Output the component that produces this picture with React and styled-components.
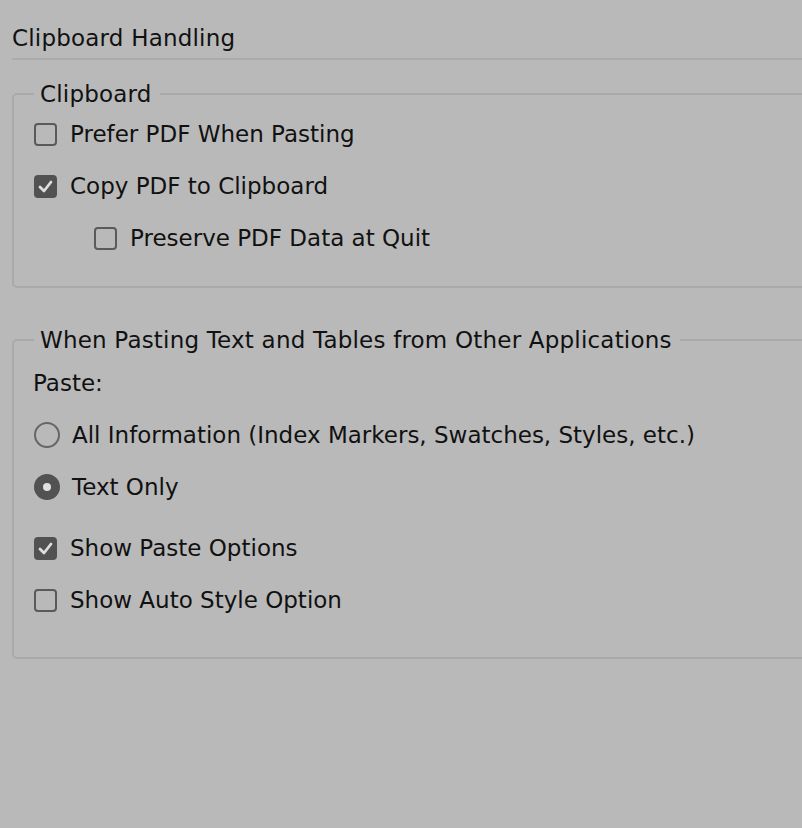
import React from "react";
import styled, { createGlobalStyle } from "styled-components";

const GlobalStyle = createGlobalStyle`
  html, body {
    margin: 0;
    padding: 0;
    background: #b9b9b9;
  }
  body {
    font-family: "DejaVu Sans", "Liberation Sans", sans-serif;
    color: #111;
  }
`;

const Page = styled.div`
  width: 802px;
  height: 828px;
  overflow: hidden;
  background: #b9b9b9;
  padding: 24px 0 0 12px;
  box-sizing: border-box;
`;

const Title = styled.h1`
  margin: 0;
  font-weight: 400;
  font-size: 23px;
  line-height: 28px;
  letter-spacing: 0.2px;
  padding-bottom: 6px;
  border-bottom: 2px solid #ababab;
`;

const Group = styled.fieldset`
  margin: ${(p) => p.$top}px -30px 0 0;
  padding: ${(p) => p.$pad}px 0 0 20px;
  border: 2px solid #a9a9a9;
  border-radius: 5px;
  height: ${(p) => p.$height}px;
  box-sizing: border-box;
`;

const Legend = styled.legend`
  margin-left: 0;
  padding: 0 8px 0 6px;
  font-size: 23px;
  line-height: 28px;
  letter-spacing: 0.2px;
`;

const Rows = styled.div`
  display: flex;
  flex-direction: column;
  gap: 24px;
`;

const Row = styled.label`
  display: flex;
  align-items: center;
  gap: 13px;
  font-size: 23px;
  line-height: 28px;
  padding-left: ${(p) => p.$indent || 0}px;
  margin-top: ${(p) => p.$space || 0}px;
`;

const Plain = styled.div`
  font-size: 23px;
  line-height: 28px;
  margin-left: -1px;
`;

const Box = styled.span`
  width: 23px;
  height: 23px;
  box-sizing: border-box;
  border-radius: 4px;
  border: 2px solid ${(p) => (p.$checked ? "#525252" : "#5a5a5a")};
  background: ${(p) => (p.$checked ? "#525252" : "transparent")};
  display: flex;
  align-items: center;
  justify-content: center;
  flex: none;
`;

const Radio = styled.span`
  width: 26px;
  height: 26px;
  box-sizing: border-box;
  border-radius: 50%;
  border: 2px solid ${(p) => (p.$checked ? "#525252" : "#666")};
  background: ${(p) => (p.$checked ? "#525252" : "transparent")};
  display: flex;
  align-items: center;
  justify-content: center;
  flex: none;
  margin-right: -1px;
  &::after {
    content: "";
    width: 8px;
    height: 8px;
    border-radius: 50%;
    background: ${(p) => (p.$checked ? "#e0e0e0" : "transparent")};
  }
`;

function Check({ checked, children, indent, space }) {
  return (
    <Row $indent={indent} $space={space}>
      <Box $checked={checked}>
        {checked && (
          <svg width="15" height="13" viewBox="0 0 15 13">
            <path
              d="M2 7 L6 11 L13 2"
              fill="none"
              stroke="#dedede"
              strokeWidth="2.8"
              strokeLinecap="round"
              strokeLinejoin="round"
            />
          </svg>
        )}
      </Box>
      {children}
    </Row>
  );
}

function Option({ checked, children }) {
  return (
    <Row>
      <Radio $checked={checked} />
      {children}
    </Row>
  );
}

export default function App() {
  return (
    <>
      <GlobalStyle />
      <Page>
        <Title>Clipboard Handling</Title>

        <Group $top={20} $pad={12} $height={208}>
          <Legend>Clipboard</Legend>
          <Rows>
            <Check>Prefer PDF When Pasting</Check>
            <Check checked>Copy PDF to Clipboard</Check>
            <Check indent={60}>Preserve PDF Data at Quit</Check>
          </Rows>
        </Group>

        <Group $top={38} $pad={15} $height={333}>
          <Legend>When Pasting Text and Tables from Other Applications</Legend>
          <Rows>
            <Plain>Paste:</Plain>
            <Option>All Information (Index Markers, Swatches, Styles, etc.)</Option>
            <Option checked>Text Only</Option>
            <Check checked space={9}>Show Paste Options</Check>
            <Check>Show Auto Style Option</Check>
          </Rows>
        </Group>
      </Page>
    </>
  );
}
